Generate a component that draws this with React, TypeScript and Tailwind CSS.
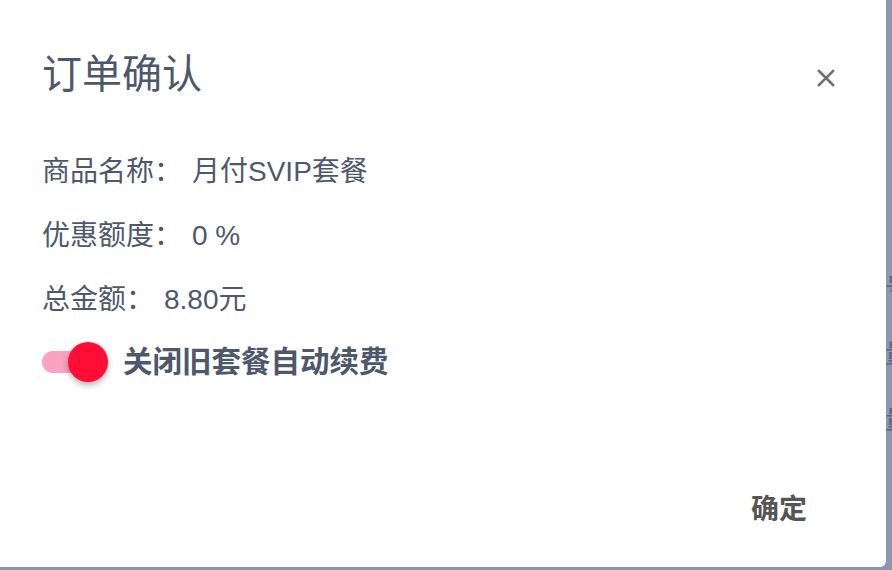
import React from 'react';

const font = { fontFamily: '"Liberation Sans", "Noto Sans CJK SC", sans-serif' };

function Toggle() {
  return (
    <div className="relative w-[66px] h-[40px] shrink-0">
      <div className="absolute left-0 top-[9px] w-[56px] h-[22px] rounded-full bg-[#f8a3bf]" />
      <div className="absolute right-0 top-0 w-[40px] h-[40px] rounded-full bg-[#ff0d35] shadow-[0_3px_6px_rgba(0,0,0,0.3)]" />
    </div>
  );
}

function Row({ label, value }: { label: string; value: string }) {
  return (
    <div>
      {label}
      <span className="ml-[10px]">{value}</span>
    </div>
  );
}

export default function App() {
  return (
    <div className="relative w-[892px] h-[570px] bg-[#8a96b4] overflow-hidden" style={font}>
      {/* page behind the overlay */}
      <div className="absolute left-[885px] top-[274px] flex flex-col gap-[38px] text-[26px] leading-[28px] text-[#56648c]">
        <span>号</span>
        <span>量</span>
        <span>量</span>
      </div>

      {/* dialog */}
      <div className="absolute left-0 top-0 w-[886px] h-[567px] bg-white rounded-br-[6px] flex flex-col">
        <div className="flex items-start justify-between pt-[50px] pl-[42px] pr-[51px]">
          <h2 className="text-[40px] leading-[48px] text-[#4d586c]">订单确认</h2>
          <button className="mt-[19px] text-[#707070]">
            <svg width="18" height="18" viewBox="0 0 18 18" fill="none" stroke="currentColor" strokeWidth="2.6" strokeLinecap="square">
              <path d="M2 2 L16 16 M16 2 L2 16" />
            </svg>
          </button>
        </div>

        <div className="mt-[42px] pl-[42px] text-[28px] leading-[64px] text-[#4d586c]">
          <Row label="商品名称：" value="月付SVIP套餐" />
          <Row label="优惠额度：" value="0 %" />
          <Row label="总金额：" value="8.80元" />
          <div className="flex items-center h-[64px] -mt-[2px]">
            <Toggle />
            <span className="ml-[15px] text-[29.5px] font-semibold">关闭旧套餐自动续费</span>
          </div>
        </div>

        <div className="flex-1" />
        <div className="flex justify-end pr-[63px] pb-[33px]">
          <button className="px-[16px] h-[48px] text-[28px] font-bold text-[#555555]">确定</button>
        </div>
      </div>
    </div>
  );
}
